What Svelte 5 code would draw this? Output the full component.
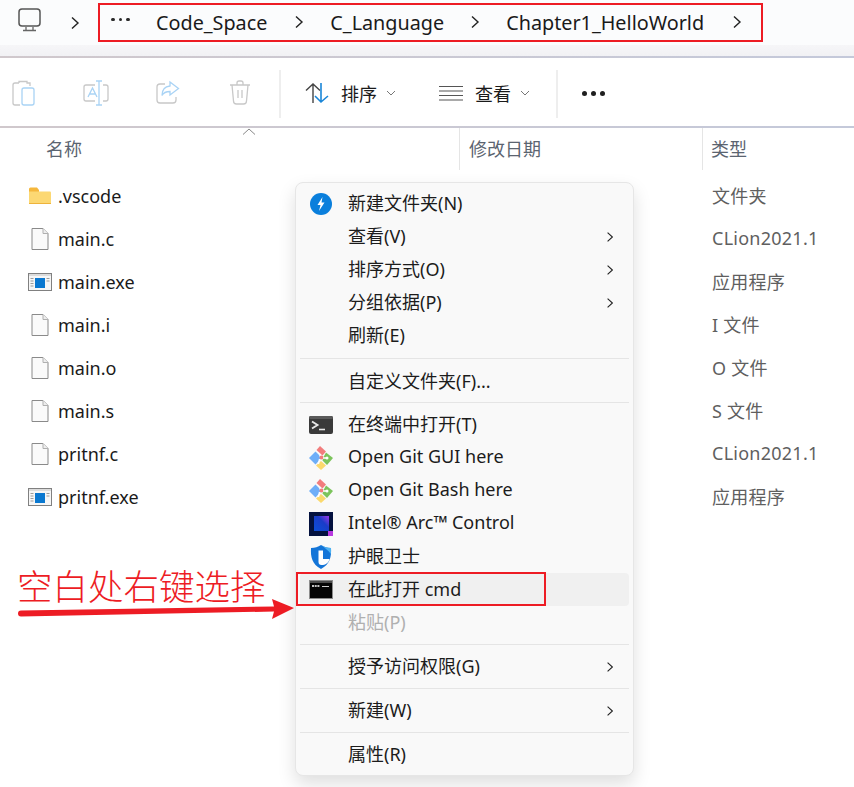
<script>
	const files = [
		{ name: '.vscode', type: '文件夹', kind: 'folder' },
		{ name: 'main.c', type: 'CLion2021.1', kind: 'file' },
		{ name: 'main.exe', type: '应用程序', kind: 'exe' },
		{ name: 'main.i', type: 'I 文件', kind: 'file' },
		{ name: 'main.o', type: 'O 文件', kind: 'file' },
		{ name: 'main.s', type: 'S 文件', kind: 'file' },
		{ name: 'pritnf.c', type: 'CLion2021.1', kind: 'file' },
		{ name: 'pritnf.exe', type: '应用程序', kind: 'exe' }
	];

	// sep holds the space above and below a divider, icon picks a drawing in the menu
	const menu = [
		{ label: '新建文件夹(N)', icon: 'bolt' },
		{ label: '查看(V)', more: true },
		{ label: '排序方式(O)', more: true },
		{ label: '分组依据(P)', more: true },
		{ label: '刷新(E)' },
		{ sep: [6, 6] },
		{ label: '自定义文件夹(F)...' },
		{ sep: [4, 5] },
		{ label: '在终端中打开(T)', icon: 'terminal' },
		{ label: 'Open Git GUI here', icon: 'git' },
		{ label: 'Open Git Bash here', icon: 'git' },
		{ label: 'Intel® Arc™ Control', icon: 'intel' },
		{ label: '护眼卫士', icon: 'shield' },
		{ label: '在此打开 cmd', icon: 'cmd', hover: true },
		{ label: '粘贴(P)', disabled: true },
		{ sep: [5, 5] },
		{ label: '授予访问权限(G)', more: true },
		{ sep: [5, 5] },
		{ label: '新建(W)', more: true },
		{ sep: [5, 5] },
		{ label: '属性(R)' }
	];
</script>

{#snippet chevron()}
	<svg class="chev" width="10" height="14" viewBox="0 0 10 14">
		<path d="M2 1.500 8 7l-6 5.500" fill="none" stroke="#222" stroke-width="1.400" />
	</svg>
{/snippet}

{#snippet caret()}
	<svg class="caret" width="10" height="6" viewBox="0 0 10 6">
		<path d="M1 1l4 4 4-4" fill="none" stroke="#777" stroke-width="1" />
	</svg>
{/snippet}

{#snippet fileIcon(kind)}
	{#if kind === 'folder'}
		<svg width="24" height="20" viewBox="0 0 24 20">
			<path d="M1 3a1.500 1.500 0 0 1 1.500-1.500H9L11 4v3H1z" fill="#f5b73c" />
			<path d="M1 5.500h21a1 1 0 0 1 1 1V17a1 1 0 0 1-1 1H2a1 1 0 0 1-1-1z" fill="#fcd873" />
			<path d="M1 17h22v.500a.500.500 0 0 1-.500.500h-21a.500.500 0 0 1-.500-.500z" fill="#eeb33a" />
		</svg>
	{:else if kind === 'file'}
		<svg width="18" height="22" viewBox="0 0 18 22">
			<path d="M1 .500h11l5 5v16H1z" fill="#fafafa" stroke="#8a8a8a" />
			<path d="M12 .500v5h5" fill="#eee" stroke="#b0b0b0" />
		</svg>
	{:else}
		<svg width="24" height="18" viewBox="0 0 24 18">
			<rect x=".5" y=".5" width="23" height="17" fill="#f6f6f6" stroke="#808080" />
			<rect x="1" y="1" width="22" height="2" fill="#dcdcdc" />
			<path d="M2.500 5.500h3M2.500 8h3M2.500 10.500h3M2.500 13h3M18.500 5.500h3M18.500 8h3" stroke="#9a9a9a" />
			<rect x="7" y="5" width="10" height="10" fill="#0a78d0" />
		</svg>
	{/if}
{/snippet}

{#snippet menuIcon(icon)}
	{#if icon === 'bolt'}
		<svg width="22" height="22" viewBox="0 0 22 22">
			<circle cx="11" cy="11" r="11" fill="#0a7fdc" />
			<path d="M12.500 4 7.500 12h3l-1.500 6 5.500-8.500h-3z" fill="#fff" />
		</svg>
	{:else if icon === 'terminal'}
		<svg width="24" height="18" viewBox="0 0 24 18">
			<rect width="24" height="18" rx="2" fill="#3a3a3a" />
			<rect width="24" height="3" rx="1.500" fill="#5a5a5a" />
			<path d="M3 5.500 8.500 9 3 12.500" fill="none" stroke="#e8e8e8" stroke-width="1.900" />
			<path d="M10 13.500h6" stroke="#e8e8e8" stroke-width="1.600" />
		</svg>
	{:else if icon === 'git'}
		<svg width="24" height="24" viewBox="0 0 24 24">
			<path d="M6.500 5.500 0 12l6.500 6.500 5-5.500-1.500-4z" fill="#6eaef8" />
			<path d="M17 6.500 24 12l-6 7-4.500-4.500 1-3.500z" fill="#7cc45c" />
			<path d="M12 15l5 4.500-5 4.500-5-4.500z" fill="#fbd96d" />
			<path d="M7.500 4 11 0l6 5.500-3.500 4z" fill="#f27d7d" />
			<circle cx="12.500" cy="11.500" r="2" fill="#f27d7d" />
			<circle cx="18" cy="12" r="1.500" fill="#fff" />
			<path d="M10.500 13 9.500 18M14 12l3 0" stroke="#fff" stroke-width="1.300" />
		</svg>
	{:else if icon === 'intel'}
		<svg width="24" height="24" viewBox="0 0 24 24">
			<defs>
				<linearGradient id="arc" x1="0" y1="1" x2="1" y2="0">
					<stop offset="0" stop-color="#0b4fd8" />
					<stop offset=".6" stop-color="#1a3cc8" />
					<stop offset="1" stop-color="#9a38e8" />
				</linearGradient>
			</defs>
			<rect width="24" height="24" fill="#04123f" />
			<rect x="5" y="4" width="15" height="15" fill="url(#arc)" />
			<rect x="19" y="19" width="5" height="5" fill="#b93ae0" />
		</svg>
	{:else if icon === 'shield'}
		<svg width="22" height="24" viewBox="0 0 22 24">
			<path d="M11 0c3 2 6 3 10 3 .500 9-1 16-10 21C2 19 .500 12 1 3c4 0 7-1 10-3z" fill="#1475d8" />
			<path d="M11 0c3 2 6 3 10 3 .100 2 .100 4-.100 6-3-4-6-6-9.900-9z" fill="#4db2f2" />
			<path d="M8.500 5.500h4.500v8.500h6.500c-1 4-4 6-8 6-2 0-3-1-3-3z" fill="#fff" />
		</svg>
	{:else if icon === 'cmd'}
		<svg width="24" height="20" viewBox="0 0 24 20">
			<rect x=".5" y=".5" width="23" height="18" fill="#050505" stroke="#8c8c8c" />
			<rect x="1" y="1" width="22" height="2" fill="#4c4c4c" />
			<path d="M3 6h8" stroke="#c4c4c4" stroke-width="2" stroke-dasharray="2 .7" />
			<path d="M13 6.500h7" stroke="#cfcfcf" stroke-width="1" />
		</svg>
	{/if}
{/snippet}

<div class="page">
	<div class="address">
		<svg class="monitor" width="24" height="24" viewBox="0 0 24 24">
			<rect x="1" y="1" width="21" height="17" rx="3" fill="none" stroke="#555" stroke-width="1.500" />
			<path d="M8 19v3M15 19v3M5 22.500h13" stroke="#666" stroke-width="1.300" fill="none" />
		</svg>
		<span class="home-chev">{@render chevron()}</span>
		<div class="crumbs">
			<span class="ellipsis"><i></i><i></i><i></i></span>
			<span class="crumb first">Code_Space</span>
			{@render chevron()}
			<span class="crumb">C_Language</span>
			{@render chevron()}
			<span class="crumb last">Chapter1_HelloWorld</span>
			{@render chevron()}
		</div>
	</div>
	<div class="address-fade"></div>

	<div class="toolbar">
		<div class="tool-group">
			<span class="tool">
				<svg width="24" height="26" viewBox="0 0 24 26">
					<path d="M7 3H3a2 2 0 0 0-2 2v18a2 2 0 0 0 2 2h5" fill="none" stroke="#c8c8c8" stroke-width="1.300" />
					<path d="M7 3V1.500h8V3h3v3" fill="none" stroke="#c8c8c8" stroke-width="1.300" />
					<rect x="10" y="8" width="12" height="17" rx="2" fill="none" stroke="#a9d3f5" stroke-width="1.300" />
				</svg>
			</span>
			<span class="tool">
				<svg width="26" height="26" viewBox="0 0 26 26">
					<path d="M12 5H3a2 2 0 0 0-2 2v12a2 2 0 0 0 2 2h9M20 5h3a2 2 0 0 1 2 2v12a2 2 0 0 1-2 2h-3" fill="none" stroke="#c8c8c8" stroke-width="1.300" />
					<path d="M5 17 9.500 8 14 17M6.500 14h6" fill="none" stroke="#a9d3f5" stroke-width="1.300" />
					<path d="M13 1h6M16 1v24M13 25h6" fill="none" stroke="#a9d3f5" stroke-width="1.300" />
				</svg>
			</span>
			<span class="tool">
				<svg width="24" height="24" viewBox="0 0 24 24">
					<path d="M9 4H4a3 3 0 0 0-3 3v13a3 3 0 0 0 3 3h13a3 3 0 0 0 3-3v-3" fill="none" stroke="#c8c8c8" stroke-width="1.300" />
					<path d="M14 2l8.500 6.500L14 15v-3.500c-4 0-6.500 1-8 4 0-6 3-9 8-9.500z" fill="none" stroke="#a9d3f5" stroke-width="1.300" />
				</svg>
			</span>
			<span class="tool">
				<svg width="22" height="25" viewBox="0 0 22 25">
					<path d="M1 5h20M8 5V3a2 2 0 0 1 2-2h2a2 2 0 0 1 2 2v2M3 5l1.500 16a3 3 0 0 0 3 3h7a3 3 0 0 0 3-3L19 5M9 10v8M13 10v8" fill="none" stroke="#c8c8c8" stroke-width="1.300" />
				</svg>
			</span>
		</div>
		<div class="tool-sep"></div>
		<div class="tool-btn sort">
			<svg width="24" height="22" viewBox="0 0 24 22">
				<path d="M8 21V2M1 8.500 8 2l7 6.500" fill="none" stroke="#444" stroke-width="1.400" />
				<path d="M16 1v19M10 14l6 6 7-6" fill="none" stroke="#1a86d8" stroke-width="1.600" />
			</svg>
			<span>排序</span>
			{@render caret()}
		</div>
		<div class="tool-btn view">
			<svg width="24" height="16" viewBox="0 0 24 16">
				<path d="M0 1.500h24M0 6h24M0 10.500h24M0 15h24" stroke="#555" stroke-width="1.200" />
			</svg>
			<span>查看</span>
			{@render caret()}
		</div>
		<div class="tool-sep second"></div>
		<div class="dots"><i></i><i></i><i></i></div>
	</div>

	<div class="list-head">
		<svg class="sort-arrow" width="14" height="7" viewBox="0 0 14 7">
			<path d="M1 6.500 7 1l6 5.500" fill="none" stroke="#888" stroke-width="1" />
		</svg>
		<span class="col-name">名称</span>
		<span class="col-date">修改日期</span>
		<span class="col-type">类型</span>
	</div>

	<div class="rows">
		{#each files as f}
			<div class="row">
				<span class="file-icon">{@render fileIcon(f.kind)}</span>
				<span class="file-name">{f.name}</span>
				<span class="file-type">{f.type}</span>
			</div>
		{/each}
	</div>

	<div class="menu">
		{#each menu as m}
			{#if m.sep}
				<div class="menu-sep" style="margin-top: {m.sep[0]}px; margin-bottom: {m.sep[1]}px"></div>
			{:else}
				<div class="menu-row" class:hover={m.hover} class:disabled={m.disabled}>
					<span class="menu-icon">{#if m.icon}{@render menuIcon(m.icon)}{/if}</span>
					<span class="menu-label">{m.label}</span>
					{#if m.more}<span class="menu-more">{@render chevron()}</span>{/if}
				</div>
			{/if}
		{/each}
		<div class="cmd-box"></div>
	</div>

	<div class="note">空白处右键选择</div>
	<svg class="arrow" width="280" height="24" viewBox="0 0 280 24">
		<path d="M3 12.500 256 8.500 254 1 276 10 254 21 256 13.500 3 18.500a3 3 0 0 1 0-6z" fill="#ed1c24" />
	</svg>
</div>

<style>
	:global(body) {
		margin: 0;
		background: #fff;
	}

	.page {
		position: relative;
		width: 854px;
		height: 787px;
		overflow: hidden;
		background: #fff;
		color: #1a1a1a;
		font-family: "Noto Sans", "Noto Sans CJK SC", sans-serif;
		font-size: 18px;
	}

	.address {
		display: flex;
		align-items: center;
		height: 45px;
		background: #fbfcfd;
		box-sizing: border-box;
		padding: 0 0 0 18px;
	}

	.monitor {
		margin-top: -6px;
	}

	.home-chev {
		display: flex;
		margin: 0 18px 0 28px;
	}

	.crumbs {
		display: flex;
		align-items: center;
		box-sizing: border-box;
		width: 665px;
		height: 39px;
		margin-top: -1px;
		padding-left: 11px;
		border: 2px solid #ed1c24;
		font-size: 19.8px;
	}

	.ellipsis {
		display: flex;
		gap: 4px;
		width: 45px;
		margin-top: -5px;
	}

	.ellipsis i {
		display: block;
		width: 3.5px;
		height: 3.5px;
		border-radius: 50%;
		background: #2a2a2a;
	}

	.crumb {
		margin-right: 27px;
		white-space: nowrap;
	}

	.crumb:not(.first) {
		margin-left: 26px;
		margin-right: 26px;
	}

	.crumb.last {
		margin-right: 28px;
	}

	.chev {
		display: block;
		flex: none;
	}

	.address-fade {
		height: 11px;
		background: linear-gradient(#f6f6f8, #f1f1f4);
		border-bottom: 2px solid;
		border-image: linear-gradient(90deg, #d0c8cc, #c4c9da) 1;
	}

	.toolbar {
		display: flex;
		align-items: center;
		height: 68px;
		border-bottom: 2px solid;
		border-image: linear-gradient(90deg, #d0c8cc, #c4c9da) 1;
		background: #fff;
	}

	.tool-group {
		display: flex;
		width: 279px;
		flex: none;
	}

	.tool {
		display: flex;
		justify-content: center;
		width: 72px;
		margin-top: 2px;
		flex: none;
	}

	.tool:first-child {
		margin-left: -12px;
	}

	.tool-sep {
		width: 2px;
		height: 48px;
		margin-top: 4px;
		background: #eee;
		flex: none;
	}

	.tool-sep.second {
		margin-left: 26px;
	}

	.tool-btn {
		display: flex;
		align-items: center;
		gap: 12px;
		margin-top: 2px;
		font-size: 18px;
	}

	.tool-btn .caret {
		margin-left: -3px;
	}

	.sort {
		margin-left: 24px;
	}

	.view {
		margin-left: 43px;
	}

	.dots {
		display: flex;
		gap: 4px;
		margin: 3px 0 0 24px;
	}

	.dots i {
		display: block;
		width: 5px;
		height: 5px;
		border-radius: 50%;
		background: #1f1f1f;
	}

	.list-head {
		position: relative;
		display: flex;
		height: 42px;
		color: #5b6470;
		font-size: 18px;
	}

	.sort-arrow {
		position: absolute;
		left: 242px;
		top: 0;
	}

	.list-head span {
		display: flex;
		align-items: center;
		box-sizing: border-box;
		padding-bottom: 3px;
	}

	.col-name {
		width: 459px;
		padding-left: 46px;
	}

	.col-date {
		width: 243px;
		padding-left: 9px;
		border-left: 1px solid #e5e5e5;
	}

	.col-type {
		padding-left: 8px;
		border-left: 1px solid #e5e5e5;
	}

	.rows {
		padding-top: 4px;
	}

	.row {
		display: flex;
		align-items: center;
		height: 43px;
	}

	.file-icon {
		display: flex;
		justify-content: center;
		width: 24px;
		margin-left: 28px;
		flex: none;
	}

	.file-name {
		width: 654px;
		margin-left: 6px;
		flex: none;
	}

	.file-type {
		margin-bottom: 2px;
		color: #5f5f5f;
		letter-spacing: 0.25px;
	}

	.menu {
		position: absolute;
		left: 295px;
		top: 182px;
		width: 339px;
		box-sizing: border-box;
		padding: 4px;
		background: #f9f9f9;
		border: 1px solid #e6e6e6;
		border-radius: 8px;
		box-shadow: 0 8px 18px rgba(0, 0, 0, 0.13);
	}

	.menu-row {
		display: flex;
		align-items: center;
		height: 33px;
		border-radius: 4px;
		color: #1c1c1c;
	}

	.menu-row.hover {
		background: #f0f0f0;
	}

	.menu-row.disabled {
		color: #b0b0b0;
	}

	.menu-icon {
		display: flex;
		justify-content: center;
		align-items: center;
		width: 42px;
		margin-right: 6px;
		flex: none;
	}

	.menu-label {
		flex: 1;
		margin-bottom: 3px;
		white-space: nowrap;
	}

	.menu-more {
		margin-right: 14px;
	}

	.menu-more .chev {
		transform: scale(0.8);
	}

	.menu-sep {
		height: 1px;
		background: #e5e5e5;
	}

	.cmd-box {
		position: absolute;
		left: 0;
		top: 389px;
		width: 250px;
		height: 34px;
		box-sizing: border-box;
		border: 2px solid #ed1c24;
	}

	.note {
		position: absolute;
		left: 17px;
		top: 561px;
		color: #ed1c24;
		font-family: "Noto Sans CJK SC", sans-serif;
		font-weight: 300;
		font-size: 35.5px;
		line-height: 48px;
		white-space: nowrap;
	}

	.arrow {
		position: absolute;
		left: 18px;
		top: 598px;
	}
</style>
